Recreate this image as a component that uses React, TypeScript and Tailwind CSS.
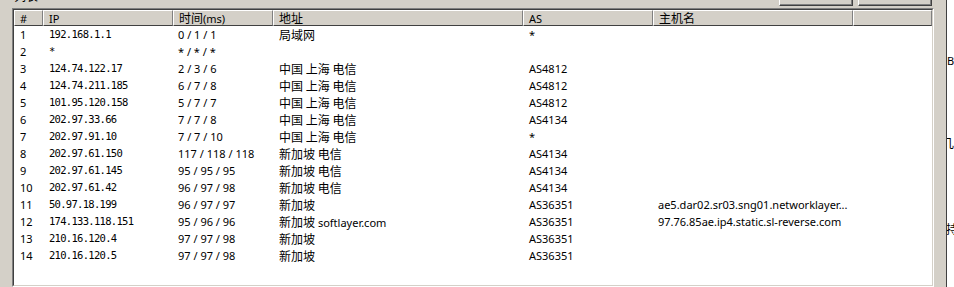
import React from 'react';

type Hop = {
  ip: string;
  time: string;
  area: string;
  areaEn?: string;
  as: string;
  host?: string;
};

const hops: Hop[] = [
  { ip: '192.168.1.1', time: '0 / 1 / 1', area: '局域网', as: '*' },
  { ip: '*', time: '* / * / *', area: '', as: '' },
  { ip: '124.74.122.17', time: '2 / 3 / 6', area: '中国 上海 电信', as: 'AS4812' },
  { ip: '124.74.211.185', time: '6 / 7 / 8', area: '中国 上海 电信', as: 'AS4812' },
  { ip: '101.95.120.158', time: '5 / 7 / 7', area: '中国 上海 电信', as: 'AS4812' },
  { ip: '202.97.33.66', time: '7 / 7 / 8', area: '中国 上海 电信', as: 'AS4134' },
  { ip: '202.97.91.10', time: '7 / 7 / 10', area: '中国 上海 电信', as: '*' },
  { ip: '202.97.61.150', time: '117 / 118 / 118', area: '新加坡 电信', as: 'AS4134' },
  { ip: '202.97.61.145', time: '95 / 95 / 95', area: '新加坡 电信', as: 'AS4134' },
  { ip: '202.97.61.42', time: '96 / 97 / 98', area: '新加坡 电信', as: 'AS4134' },
  {
    ip: '50.97.18.199',
    time: '96 / 97 / 97',
    area: '新加坡',
    as: 'AS36351',
    host: 'ae5.dar02.sr03.sng01.networklayer...',
  },
  {
    ip: '174.133.118.151',
    time: '95 / 96 / 96',
    area: '新加坡',
    areaEn: 'softlayer.com',
    as: 'AS36351',
    host: '97.76.85ae.ip4.static.sl-reverse.com',
  },
  { ip: '210.16.120.4', time: '97 / 97 / 98', area: '新加坡', as: 'AS36351' },
  { ip: '210.16.120.5', time: '97 / 97 / 98', area: '新加坡', as: 'AS36351' },
];

const sans = "font-['Noto_Sans','Noto_Sans_CJK_SC',sans-serif] text-[11px]";
const cjk = "font-['Noto_Sans_CJK_SC','Noto_Sans',sans-serif] text-[12px]";
const mono = "font-['DejaVu_Sans_Mono','Noto_Sans_CJK_SC',monospace] text-[10.5px] tracking-[-0.7px]";

// column widths, left to right
const cols = ['w-[29px]', 'w-[130px]', 'w-[100px]', 'w-[250px]', 'w-[130px]', 'w-[200px]', 'flex-1'];

function HeaderCell({ width, children }: { width: string; children?: React.ReactNode }) {
  return (
    <div
      className={`${width} h-[16px] shrink-0 flex items-center pl-[5px] border-t border-l border-white border-r border-r-[#808080] border-b border-b-[#404040] text-black leading-none`}
    >
      {children}
    </div>
  );
}

function Button() {
  return (
    <div className="w-[74px] h-[6px] bg-[#d4d0c8] border-l border-l-white border-r border-r-[#404040] border-b border-b-[#404040] shadow-[inset_-1px_-1px_0_#808080]" />
  );
}

export default function App() {
  return (
    <div className="w-[954px] h-[287px] bg-[#d4d0c8] flex overflow-hidden select-none">
      <div className="w-[934px] flex flex-col shrink-0">
        {/* caption strip with the tool buttons */}
        <div className="h-[8px] flex items-start">
          <span className={`${cjk} ml-[14px] -mt-[11px] leading-[14px] text-black`}>列表</span>
          <div className="ml-auto mr-[2px] flex gap-[5px]">
            <Button />
            <Button />
          </div>
        </div>

        {/* trace list */}
        <div className="ml-[12px] w-[922px] h-[279px] border border-t-[#808080] border-l-[#808080] border-r-white border-b-white">
          <div className="h-full border border-t-[#404040] border-l-[#404040] border-r-[#d4d0c8] border-b-[#d4d0c8] bg-white flex flex-col">
            <div className="flex bg-[#d4d0c8]">
              <HeaderCell width={cols[0]}>
                <span className={sans}>#</span>
              </HeaderCell>
              <HeaderCell width={cols[1]}>
                <span className={sans}>IP</span>
              </HeaderCell>
              <HeaderCell width={cols[2]}>
                <span className={cjk}>时间</span>
                <span className={sans}>(ms)</span>
              </HeaderCell>
              <HeaderCell width={cols[3]}>
                <span className={cjk}>地址</span>
              </HeaderCell>
              <HeaderCell width={cols[4]}>
                <span className={sans}>AS</span>
              </HeaderCell>
              <HeaderCell width={cols[5]}>
                <span className={cjk}>主机名</span>
              </HeaderCell>
              <HeaderCell width={cols[6]} />
            </div>

            <div className="flex flex-col text-black">
              {hops.map((h, i) => (
                <div key={i} className="flex h-[17px] items-center leading-none">
                  <div className={`${cols[0]} shrink-0 pl-[6px] ${sans}`}>{i + 1}</div>
                  <div className={`${cols[1]} shrink-0 pl-[6px] ${mono}`}>{h.ip}</div>
                  <div className={`${cols[2]} shrink-0 pl-[5px] ${sans}`}>{h.time}</div>
                  <div className={`${cols[3]} shrink-0 pl-[6px] ${cjk} whitespace-pre`}>
                    {h.area}
                    {h.areaEn && <span className={sans}> {h.areaEn}</span>}
                  </div>
                  <div className={`${cols[4]} shrink-0 pl-[6px] ${sans}`}>{h.as}</div>
                  <div className={`${cols[5]} shrink-0 pl-[5px] ${sans} whitespace-nowrap`}>{h.host}</div>
                  <div className={cols[6]} />
                </div>
              ))}
            </div>
          </div>
        </div>
      </div>

      {/* splitter and the edge of the neighbouring pane */}
      <div className="w-[12px] shrink-0 bg-[#d4d0c8]" />
      <div className="w-px shrink-0 bg-[#404040]" />
      <div className={`flex-1 bg-white overflow-hidden flex flex-col ${cjk} text-black leading-[14px]`}>
        <span className={`${sans} mt-[54px] whitespace-nowrap`}>B:</span>
        <span className="mt-[68px] -ml-[5px] whitespace-nowrap">几</span>
        <span className="mt-[72px] -ml-[1px] whitespace-nowrap">持</span>
      </div>
    </div>
  );
}
